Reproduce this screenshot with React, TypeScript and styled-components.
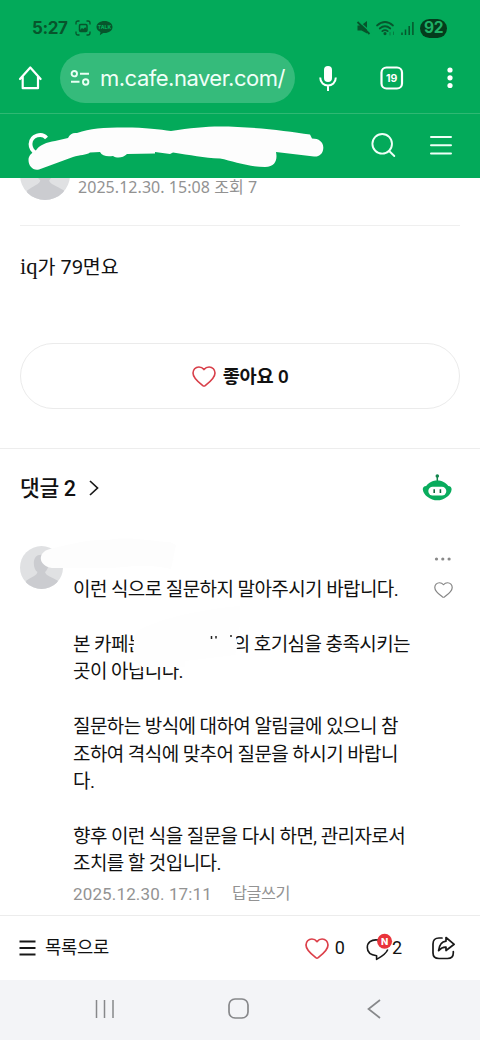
import React from 'react';
import styled, { createGlobalStyle } from 'styled-components';

const Global = createGlobalStyle`
  * { box-sizing: border-box; }
  body { margin: 0; background: #fff; font-family: Roboto, "Noto Sans CJK KR", sans-serif; color: #111; }
  svg { display: block; flex: none; overflow: visible; }
`;

const Screen = styled.div`
  width: 480px;
  height: 1040px;
  display: flex;
  flex-direction: column;
  overflow: hidden;
  background: #fff;
`;

const Text = styled.span<{ $size: number; $color?: string; $weight?: number; $spacing?: number; $font?: string }>`
  font-size: ${p => p.$size}px;
  line-height: 1.2;
  color: ${p => p.$color ?? '#111'};
  font-weight: ${p => p.$weight ?? 400};
  letter-spacing: ${p => p.$spacing ?? 0}px;
  font-family: ${p => p.$font ?? 'Roboto'}, "Noto Sans CJK KR", sans-serif;
  white-space: pre;
`;

const StatusBar = styled.div`
  height: 50px;
  padding: 6px 33px 0 32px;
  display: flex;
  align-items: center;
  justify-content: space-between;
  background: #03aa5a;
`;
const StatusGroup = styled.div<{ $gap: number }>`
  display: flex;
  align-items: center;
  gap: ${p => p.$gap}px;
`;
const Battery = styled.div`
  width: 27px;
  height: 19px;
  border-radius: 10px;
  background: #043c1c;
  display: flex;
  align-items: center;
  justify-content: center;
`;

const BrowserBar = styled.div`
  height: 63px;
  padding: 3px 27px 10px 18px;
  display: flex;
  align-items: center;
  background: #03aa5a;
`;
const UrlPill = styled.div`
  width: 235px;
  height: 50px;
  margin-left: 17px;
  padding: 0 10px;
  border-radius: 25px;
  background: #35bb7b;
  display: flex;
  align-items: center;
  gap: 10px;
`;
const BrowserActions = styled.div`
  flex: 1;
  margin-left: 23.5px;
  display: flex;
  align-items: center;
  justify-content: space-between;
`;

const CafeBar = styled.div`
  height: 65px;
  padding: 0 27px 0 28px;
  border-top: 1px solid #2fb873;
  display: flex;
  align-items: center;
  background: #03aa5a;
`;
const CafeActions = styled.div`
  flex: 1;
  display: flex;
  justify-content: flex-end;
  align-items: center;
  gap: 34px;
  padding-bottom: 2px;
`;

const Meta = styled.div`
  height: 48px;
  margin: 0 20px;
  border-bottom: 1px solid #efefef;
  display: flex;
  align-items: flex-start;
  gap: 8px;
`;
const MetaAvatar = styled.div`
  width: 50px;
  height: 22px;
  overflow: hidden;
  display: flex;
  align-items: flex-end;
`;
const Body = styled.div`
  height: 117px;
  padding: 27px 20px 0;
`;
const LikeButton = styled.div`
  height: 66px;
  margin: 0 20px;
  border: 1px solid #ebebeb;
  border-radius: 33px;
  display: flex;
  align-items: center;
  justify-content: center;
  gap: 7px;
`;
const CommentHeader = styled.div`
  height: 80px;
  margin-top: 39px;
  padding: 0 28px 0 20px;
  border-top: 1px solid #ededed;
  display: flex;
  align-items: center;
  justify-content: space-between;
`;
const RobotButton = styled.div`
  padding-bottom: 4px;
`;
const Comment = styled.div`
  position: relative;
  height: 387px;
  padding: 18px 27px 0 20px;
  display: flex;
`;
const CommentBody = styled.div`
  width: 345px;
  margin: 30px 0 0 10px;
  display: flex;
  flex-direction: column;
`;
const Line = styled.div`
  height: 27.45px;
  line-height: 27.45px;
  font-size: 19px;
  letter-spacing: -0.58px;
  white-space: pre;
  display: flex;
  justify-content: flex-start;
`;
const Hidden = styled.span`
  width: 88px;
  flex: none;
`;
const CommentInfo = styled.div`
  display: flex;
  gap: 20px;
  margin-top: 6px;
`;
const SideActions = styled.div`
  flex: 1;
  display: flex;
  flex-direction: column;
  align-items: flex-end;
  padding-top: 10px;
  gap: 20px;
`;
const Scribble = styled.svg`
  position: absolute;
  left: 0;
  top: 0;
`;

const Footer = styled.div`
  height: 65px;
  border-top: 1px solid #ececec;
  padding: 0 25px 0 19px;
  display: flex;
  align-items: center;
  background: #fff;
`;
const FooterItem = styled.div<{ $left: number; $gap: number }>`
  display: flex;
  align-items: center;
  margin-left: ${p => p.$left}px;
  gap: ${p => p.$gap}px;
`;
const FooterLabel = styled.div`
  padding-top: 2px;
  display: flex;
`;
const Spacer = styled.div`
  flex: 1;
`;
const NavBar = styled.div`
  height: 60px;
  padding: 0 100px 3px 94px;
  background: #f3f4f7;
  display: flex;
  align-items: center;
`;
const NavKey = styled.div<{ $left?: number }>`
  margin-left: ${p => p.$left ?? 0}px;
`;

const INK = '#07552c';

const Avatar = ({ size, id }: { size: number; id: string }) => (
  <svg width={size} height={size} viewBox="0 0 42 42">
    <clipPath id={id}><circle cx="21" cy="21" r="21" /></clipPath>
    <g clipPath={`url(#${id})`}>
      <rect width="42" height="42" fill="#e0e1e3" />
      <path d="M13.500 17C13.500 11.500 16 8.500 20.500 8.500S28 11.500 28 17C28 21 26 24 24.500 25.500C24.500 28.500 31 30.500 37 34V42H6V34C11 30.500 17 28.500 17 25.500C15 24 13.500 21 13.500 17Z" fill="#cbccd0" />
    </g>
  </svg>
);

const Heart = ({ w, h, color, stroke }: { w: number; h: number; color: string; stroke: number }) => (
  <svg width={w} height={h} viewBox="0 0 24 21" preserveAspectRatio="none" fill="none" stroke={color} strokeWidth={stroke} strokeLinejoin="round">
    <path d="M12 3.600C10.500 1.700 8.800 1 6.900 1C3.400 1 1 3.700 1 7.100C1 12.500 7 16.500 10.800 19.600Q12 20.500 13.200 19.600C17 16.500 23 12.500 23 7.100C23 3.700 20.600 1 17.100 1C15.200 1 13.500 1.700 12 3.600Z" />
  </svg>
);

const ScreenshotIcon = () => (
  <svg width="16" height="16" viewBox="0 0 16 16" fill="none" stroke={INK} strokeWidth="1.300">
    <path d="M1 4.500V3Q1 1 3 1H4.500M11.500 1H13Q15 1 15 3V4.500M15 11.500V13Q15 15 13 15H11.500M4.500 15H3Q1 15 1 13V11.500" />
    <rect x="4.500" y="4.500" width="7.500" height="7" rx="1.200" strokeWidth="1.500" />
    <path d="M5 10L7 8L8.300 9L10.200 7.300L11.800 9V11H5Z" fill={INK} stroke="none" />
  </svg>
);

const TalkIcon = () => (
  <svg width="17" height="16" viewBox="0 0 17 16">
    <path d="M8.500 1C13 1 16.500 3.500 16.500 7S13 13 8.500 13L7.200 12.900L3.800 15.200L4.500 12C2 11 .5 9.200 .5 7C.5 3.500 4 1 8.500 1Z" fill={INK} />
    <text x="8.500" y="9" textAnchor="middle" fontFamily="Inter, sans-serif" fontSize="5" fontWeight="800" fill="#03aa5a">TALK</text>
  </svg>
);

const MuteIcon = () => (
  <svg width="13" height="14" viewBox="0 0 13 14">
    <path d="M.5 4.500H4L10 0V12.500L4.500 9.500H.5Z" fill={INK} />
    <path d="M2 .5L14 11.500" stroke="#03aa5a" strokeWidth="1.300" />
    <path d="M.5 1L12.500 13" stroke={INK} strokeWidth="1.800" />
  </svg>
);

const WifiIcon = () => (
  <svg width="19" height="15" viewBox="0 0 19 15" fill="none" stroke={INK} strokeWidth="1.700" strokeLinecap="round">
    <path d="M1 4.500Q9 -2.500 17 4.500M3.700 7.500Q9 3 14.300 7.500M6.300 10.200Q9 8 11.700 10.200" />
    <circle cx="9" cy="12.600" r=".7" fill={INK} />
    <path d="M14 14V11.500M17.500 11V13.500" strokeWidth="1" opacity=".55" />
  </svg>
);

const SignalIcon = () => (
  <svg width="13" height="13" viewBox="0 0 13 13" stroke={INK} strokeWidth="1.500">
    <path d="M1 13V10.500M4.500 13V7.500M8.200 13V4M11.900 13V0" />
  </svg>
);

const HomeIcon = () => (
  <svg width="25" height="26" viewBox="0 0 25 26" fill="none" stroke="#fff" strokeWidth="2.200" strokeLinejoin="round" strokeLinecap="round">
    <path d="M2 14L12.300 2.500L22.600 14M4.700 11.500V23.200H20V11.500" />
  </svg>
);

const TuneIcon = () => (
  <svg width="20" height="16" viewBox="0 0 20 16" fill="none" stroke="#e9fff4" strokeWidth="1.900">
    <circle cx="4.300" cy="3.700" r="2.700" />
    <path d="M10 3.700H19M1 11.800H9.500" />
    <circle cx="15.700" cy="12" r="2.700" />
  </svg>
);

const MicIcon = () => (
  <svg width="18" height="25" viewBox="0 0 18 25" fill="none" stroke="#fff" strokeWidth="2">
    <rect x="5" y="0" width="8" height="16" rx="4" fill="#fff" stroke="none" />
    <path d="M1.200 11.500C1.200 22 16.800 22 16.800 11.500M9 19.500V25" />
  </svg>
);

const TabsIcon = () => (
  <svg width="24" height="24" viewBox="0 0 24 24">
    <rect x="1.500" y="1.500" width="20.500" height="21" rx="5" fill="none" stroke="#fff" strokeWidth="2.200" />
    <text x="11.700" y="15.800" textAnchor="middle" fontFamily="Inter, sans-serif" fontWeight="700" fontSize="10.500" fill="#fff">19</text>
  </svg>
);

const MoreIcon = () => (
  <svg width="6" height="22" viewBox="0 0 6 22" fill="#fff">
    <circle cx="3" cy="3" r="2.600" /><circle cx="3" cy="10.800" r="2.600" /><circle cx="3" cy="18.500" r="2.600" />
  </svg>
);

const CafeTitle = () => (
  <svg width="296" height="64" viewBox="28 114 296 64">
    <path d="M46.500 138C42 132.500 31 135 30.500 144C30.500 148 32.500 151 36 153" fill="none" stroke="#fff" strokeWidth="3.800" />
    <path d="M28.500 160C28.500 156 31 153 35.500 151C39 145 47 142 55 141L68 138C70 133.500 73 132.500 77 133C90 128.500 103 127.500 125 127.500C145 127.500 160 129.500 171 131C190 128 205 126.500 220 126.500C249 126.500 285 130.500 310 134.500L312 138.500C319 138.500 323.500 142 323.300 148C323 154 319 157 314 156.500L276 152C277.500 159 276 167 265 167C248 167 233 161 220 158.500C204 158 190 155 173 152.500L170 154L155 152V153.500L127 154C123 158 117 158.500 113 156C107 157 102 156 100 152L90 152.500C86 155.500 80 154.500 73 157L39 169.500C33 171 28.500 166 28.500 160Z" fill="#fdfdfd" />
  </svg>
);

const SearchIcon = () => (
  <svg width="25" height="26" viewBox="0 0 25 26" fill="none" stroke="#effff7" strokeWidth="1.900" strokeLinecap="round">
    <circle cx="11.200" cy="11.800" r="9.800" /><path d="M18.200 19L23.300 24" />
  </svg>
);

const MenuIcon = () => (
  <svg width="23" height="20" viewBox="0 0 23 20" stroke="#effff7" strokeWidth="2" strokeLinecap="round">
    <path d="M1 2H21M1 10.200H21M1 18.400H21" />
  </svg>
);

const RobotIcon = () => (
  <svg width="30" height="28" viewBox="0 0 30 28">
    <circle cx="15.300" cy="3" r="1.800" fill="#12854d" />
    <path d="M15.300 3V9" stroke="#12854d" strokeWidth="1.500" />
    <path d="M15.300 7.500C19.500 7.500 24 9.500 26.300 13C28.500 13.200 29.800 14.600 29.600 16.500C29.300 19.500 27.500 22 25.500 23.500C22 26.500 18.500 27.300 15.300 27.300S8.500 26.500 5 23.500C3 22 1.200 19.500 .8 16.500C.6 14.600 2 13.200 4.200 13C6.500 9.500 11 7.500 15.300 7.500Z" fill="#09ac5d" />
    <rect x="6.300" y="13.700" width="18" height="8.800" rx="4.400" fill="#fff" />
    <path d="M12.200 16.200V19.900M18.400 16.200V19.900" stroke="#126b40" strokeWidth="1.600" />
  </svg>
);

const CommentIcon = () => (
  <svg width="26" height="28" viewBox="0 0 26 28">
    <path d="M12 6C5 5 1.300 9 1.300 13.500C1.300 18 4.500 21 10.600 21.800V25.400C15 23 20 20 21.800 15.500" fill="none" stroke="#181818" strokeWidth="1.600" strokeLinejoin="round" />
    <circle cx="18.600" cy="7.300" r="7.500" fill="#e9343b" />
    <text x="18.600" y="10.800" textAnchor="middle" fontFamily="Inter, sans-serif" fontWeight="800" fontSize="9.500" fill="#fff">N</text>
  </svg>
);

const ShareIcon = () => (
  <svg width="23" height="24" viewBox="0 0 23 24" fill="none" stroke="#181818" strokeWidth="1.700" strokeLinejoin="round" strokeLinecap="round">
    <path d="M10 2H7Q1 2 1 8V17Q1 22.500 7 22.500H15.500Q21.300 22.500 21.300 17V15.500" />
    <path d="M14 1.500L22.200 8.300L14 14.500V11.200C10.500 11 8.500 12.500 6.600 14.700C7.200 9 9.500 5.800 14 5.200Z" />
  </svg>
);

const lines = [
  '질문하는 방식에 대하여 알림글에 있으니 참',
  '조하여 격식에 맞추어 질문을 하시기 바랍니',
  '다.',
  '',
  '향후 이런 식을 질문을 다시 하면, 관리자로서',
  '조치를 할 것입니다.',
];

export default function App() {
  return (
    <Screen>
      <Global />
      <StatusBar>
        <StatusGroup $gap={7}>
          <Text $size={17} $weight={700} $color={INK} $font="Inter" $spacing={-0.4}>5:27</Text>
          <StatusGroup $gap={5}><ScreenshotIcon /><TalkIcon /></StatusGroup>
        </StatusGroup>
        <StatusGroup $gap={6}>
          <MuteIcon /><WifiIcon /><SignalIcon />
          <Battery><Text $size={15.500} $weight={700} $color="#1fb267" $font="Inter" $spacing={-0.4}>92</Text></Battery>
        </StatusGroup>
      </StatusBar>
      <BrowserBar>
        <HomeIcon />
        <UrlPill>
          <TuneIcon />
          <Text $size={22} $color="#f0fff8" $font="Inter" $spacing={-0.5}>m.cafe.naver.com/</Text>
        </UrlPill>
        <BrowserActions>
          <MicIcon />
          <TabsIcon />
          <MoreIcon />
        </BrowserActions>
      </BrowserBar>
      <CafeBar>
        <CafeTitle />
        <CafeActions><SearchIcon /><MenuIcon /></CafeActions>
      </CafeBar>

      <Meta>
        <MetaAvatar><Avatar size={50} id="author" /></MetaAvatar>
        <Text $size={16} $color="#929292" $font="'Noto Sans'" $spacing={0.05}>2025.12.30. 15:08 조회 7</Text>
      </Meta>
      <Body>
        <Text $size={22.500} $font="'Liberation Serif'">iq</Text>
        <Text $size={19.500} $font="'Noto Sans'">가 79면요</Text>
      </Body>
      <LikeButton>
        <Heart w={24} h={21} color="#d83f49" stroke={1.600} />
        <Text $size={18.700} $weight={600} $font="'Noto Sans'" $spacing={-0.3}>좋아요 0</Text>
      </LikeButton>

      <CommentHeader>
        <StatusGroup $gap={13}>
          <Text $size={21.500} $weight={500} $spacing={-0.4}>댓글 2</Text>
          <svg width="10" height="16" viewBox="0 0 10 16" fill="none" stroke="#181818" strokeWidth="1.700"><path d="M1 1L8.500 8L1 15" /></svg>
        </StatusGroup>
        <RobotButton><RobotIcon /></RobotButton>
      </CommentHeader>

      <Comment>
        <Avatar size={43} id="commenter" />
        <CommentBody>
          <Line>이런 식으로 질문하지 말아주시기 바랍니다.</Line>
          <Line />
          <Line><span>본 카페는</span><Hidden /><span>의 호기심을 충족시키는</span></Line>
          <Line>곳이 아닙니다.</Line>
          <Line />
          {lines.map((t, i) => <Line key={i}>{t}</Line>)}
          <CommentInfo>
            <Text $size={17} $color="#939393" $spacing={0.15}>2025.12.30. 17:11</Text>
            <Text $size={16.300} $color="#939393" $spacing={-0.5}>답글쓰기</Text>
          </CommentInfo>
        </CommentBody>
        <SideActions>
          <svg width="20" height="6" viewBox="0 0 20 6" fill="#898989"><circle cx="3.500" cy="3" r="1.600" /><circle cx="9.800" cy="3" r="1.600" /><circle cx="16.100" cy="3" r="1.600" /></svg>
          <Heart w={19} h={16} color="#858585" stroke={1.500} />
        </SideActions>
        <Scribble width="480" height="160" viewBox="0 528 480 160">
          <path d="M50 549C75 543 92 539 108 540C130 536 148 541 170 542L176 545L171 569C145 563 130 567 110 568L52 568C38 566 37 552 50 549Z" fill="#fdfdfd" />
          <path d="M134 640L136 632C155 620 195 610 240 606V625L236 637C239 646 236 650 235 655L185 661V667H142L133 657Z" fill="#fefefe" />
          <path d="M211.500 636V639M216 636V638.500M231 635V637" stroke="#222" strokeWidth="1.500" />
        </Scribble>
      </Comment>

      <Footer>
        <FooterItem $left={0} $gap={9}>
          <svg width="17" height="16" viewBox="0 0 17 16" stroke="#181818" strokeWidth="1.800"><path d="M.5 1.500H16.500M.5 8H16.500M.5 14.500H16.500" /></svg>
          <FooterLabel><Text $size={17.700} $spacing={-0.3}>목록으로</Text></FooterLabel>
        </FooterItem>
        <Spacer />
        <FooterItem $left={0} $gap={6}>
          <Heart w={24} h={21} color="#dc404a" stroke={1.700} />
          <Text $size={18}>0</Text>
        </FooterItem>
        <FooterItem $left={21} $gap={0}>
          <CommentIcon />
          <Text $size={18}>2</Text>
        </FooterItem>
        <FooterItem $left={30} $gap={0}><ShareIcon /></FooterItem>
      </Footer>
      <NavBar>
        <NavKey><svg width="20" height="20" viewBox="0 0 20 20" stroke="#87888b" strokeWidth="1.500"><path d="M2.500 1V19M10.500 1V19M19 1V19" /></svg></NavKey>
        <NavKey $left={114}><svg width="21" height="21" viewBox="0 0 21 21" fill="none" stroke="#87888b" strokeWidth="1.700"><rect x="1" y="1" width="19" height="19" rx="6" /></svg></NavKey>
        <NavKey $left={118}><svg width="14" height="20" viewBox="0 0 14 20" fill="none" stroke="#87888b" strokeWidth="1.700"><path d="M13 1L1.500 10L13 19" /></svg></NavKey>
      </NavBar>
    </Screen>
  );
}
